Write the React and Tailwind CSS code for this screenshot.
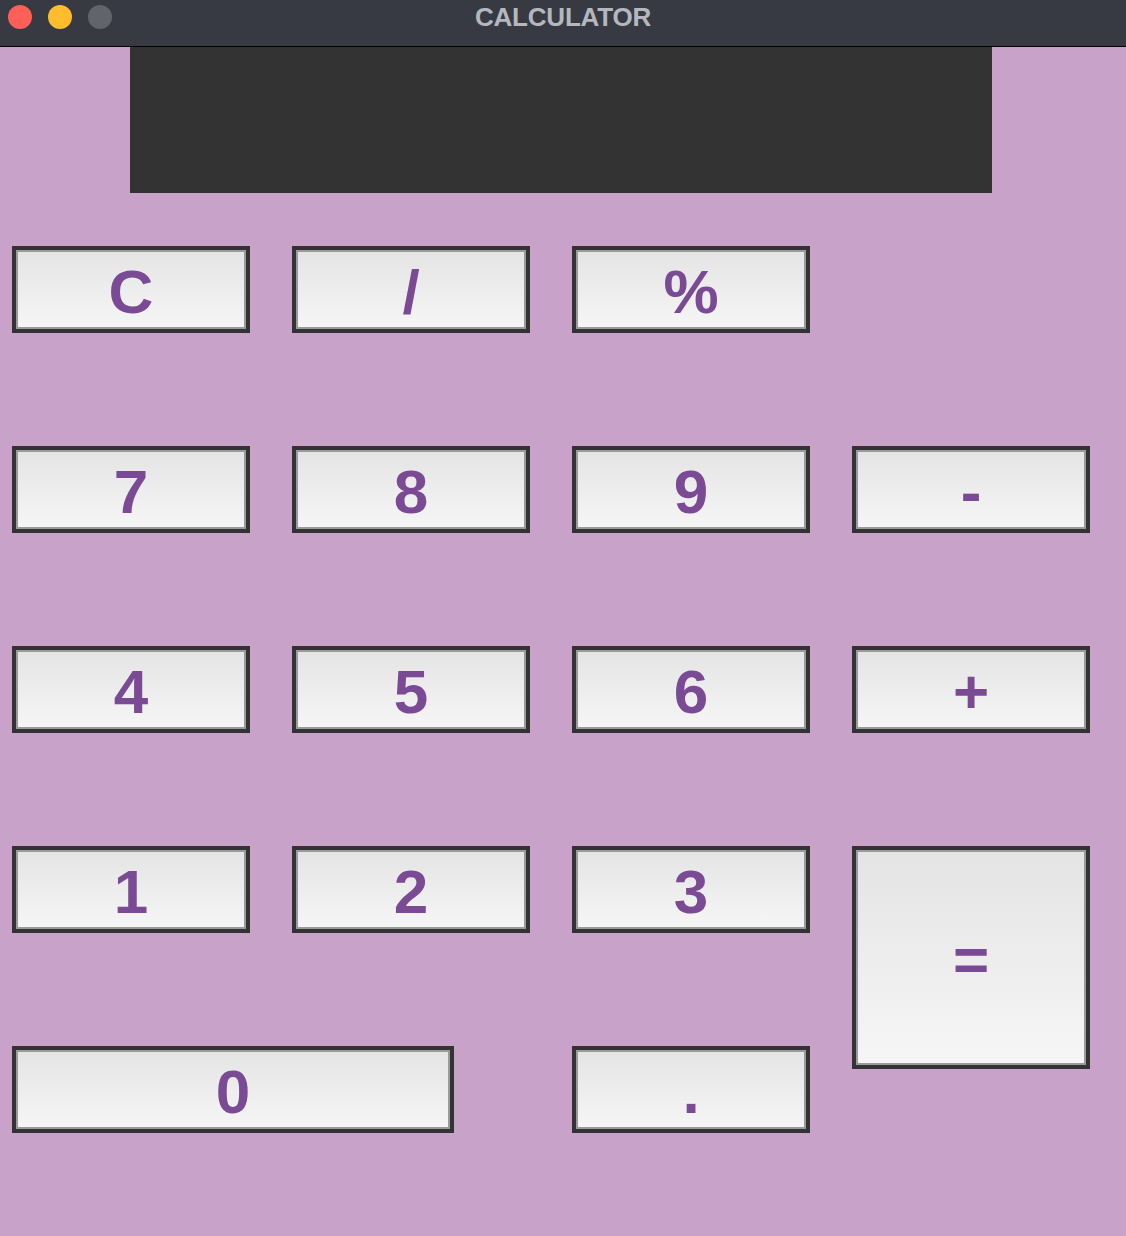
import React from 'react';

const font = { fontFamily: '"Liberation Sans", Arial, sans-serif' };

const Key = ({ label, className = '' }) => (
  <button
    className={`flex items-center justify-center pt-[4px] border-4 border-[#333333] bg-gradient-to-b from-[#e4e4e4] to-[#f6f6f6] shadow-[inset_0_0_0_2px_#9a9a9a] text-[62px] font-bold leading-none text-[#7b4a94] ${className}`}
  >
    {label}
  </button>
);

export default function App() {
  return (
    <div className="w-[1126px] h-[1236px] bg-[#c8a2c8] flex flex-col" style={font}>
      {/* Title bar */}
      <div className="relative h-[47px] shrink-0 bg-[#373a43] border-b border-black flex items-center justify-center">
        <div className="absolute left-[8px] top-[5px] flex gap-[16px]">
          <span className="w-6 h-6 rounded-full bg-[#fe5f57]" />
          <span className="w-6 h-6 rounded-full bg-[#febc2e]" />
          <span className="w-6 h-6 rounded-full bg-[#62646c]" />
        </div>
        <span className="-mt-[12px] text-[26px] font-bold text-[#b5b7be] tracking-[-0.2px]">CALCULATOR</span>
      </div>

      {/* Display */}
      <div className="ml-[130px] w-[862px] h-[146px] bg-[#333333]" />

      {/* Keys */}
      <div className="mt-[53px] ml-[12px] grid grid-cols-[repeat(4,238px)] grid-rows-[repeat(5,87px)] gap-x-[42px] gap-y-[113px]">
        <Key label="C" />
        <Key label="/" />
        <Key label="%" />
        <div />

        <Key label="7" />
        <Key label="8" />
        <Key label="9" />
        <Key label="-" />

        <Key label="4" />
        <Key label="5" />
        <Key label="6" />
        <Key label="+" />

        <Key label="1" />
        <Key label="2" />
        <Key label="3" />
        <Key label="=" className="row-span-2 self-start h-[223px]" />

        <Key label="0" className="col-span-2 w-[442px]" />
        <Key label="." />
      </div>
    </div>
  );
}
